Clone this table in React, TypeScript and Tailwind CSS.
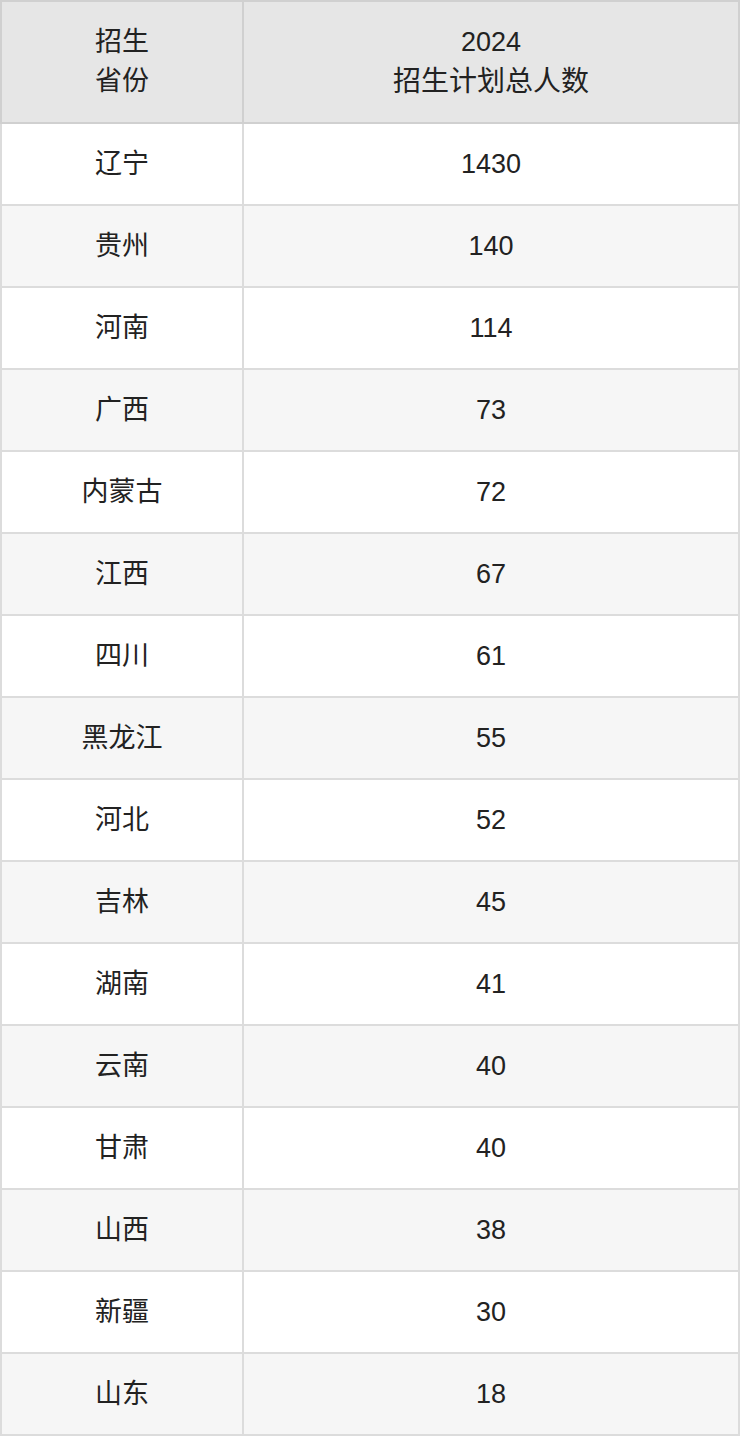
const rows: [string, number][] = [
  ['辽宁', 1430],
  ['贵州', 140],
  ['河南', 114],
  ['广西', 73],
  ['内蒙古', 72],
  ['江西', 67],
  ['四川', 61],
  ['黑龙江', 55],
  ['河北', 52],
  ['吉林', 45],
  ['湖南', 41],
  ['云南', 40],
  ['甘肃', 40],
  ['山西', 38],
  ['新疆', 30],
  ['山东', 18],
];

export default function App() {
  return (
    <div
      className="w-[740px] bg-white text-[#222] text-[27px] leading-[39px]"
      style={{ fontFamily: '"Liberation Sans", "Noto Sans CJK SC", sans-serif' }}
    >
      <table className="w-full table-fixed border-collapse">
        <colgroup>
          <col className="w-[242px]" />
          <col />
        </colgroup>
        <thead>
          <tr className="bg-[#e6e6e6] h-[122px]">
            <th className="border-2 border-[#d0d0d0] font-normal text-center align-middle">
              招生
              <br />
              省份
            </th>
            <th className="border-2 border-[#d0d0d0] font-normal text-center align-middle">
              2024
              <br />
              <span className="text-[28px]">招生计划总人数</span>
            </th>
          </tr>
        </thead>
        <tbody>
          {rows.map(([province, total], i) => (
            <tr key={province} className={`h-[82px] ${i % 2 === 1 ? 'bg-[#f6f6f6]' : 'bg-white'}`}>
              <td className="border-2 border-[#dcdcdc] text-center align-middle">{province}</td>
              <td className="border-2 border-[#dcdcdc] text-center align-middle">{total}</td>
            </tr>
          ))}
        </tbody>
      </table>
    </div>
  );
}
